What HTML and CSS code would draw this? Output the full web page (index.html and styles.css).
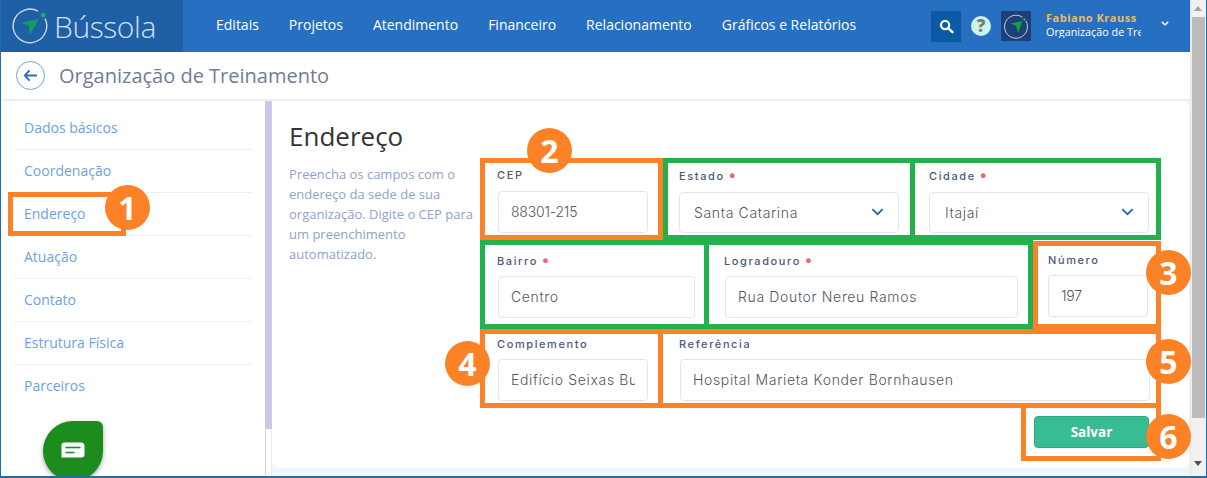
FILE: index.html
```html
<!DOCTYPE html>
<html lang="pt-BR">
<head>
<meta charset="utf-8">
<title>Bússola - Endereço</title>
<link rel="stylesheet" href="styles.css">
</head>
<body>
<div class="window">
  <div class="app">
    <header class="topbar">
      <div class="brand">
        <svg class="brand-icon" viewBox="0 0 36 36" aria-hidden="true">
          <path d="M26 3.2A16.8 16.8 0 1 0 33 10.5" fill="none" stroke="#c9dcea" stroke-width="1.4"/>
          <circle cx="31" cy="7" r="2.2" fill="#1eb36b"/>
          <path d="M9 15 L27 11 L18 27 L16.8 17.5 Z" fill="#149e5e"/>
        </svg>
        <span class="brand-name">Bússola</span>
      </div>
      <nav class="mainnav">
        <a>Editais</a><a>Projetos</a><a>Atendimento</a><a>Financeiro</a><a>Relacionamento</a><a>Gráficos e Relatórios</a>
      </nav>
      <div class="tools">
        <button class="search-btn" aria-label="Buscar">
          <svg viewBox="0 0 16 16" width="15" height="15"><circle cx="6.5" cy="6.5" r="4.4" fill="none" stroke="#fff" stroke-width="2.4"/><path d="M10 10l4.4 4" stroke="#fff" stroke-width="2.6" stroke-linecap="round"/></svg>
        </button>
        <span class="help">?</span>
        <span class="avatar">
          <svg viewBox="0 0 30 30" width="30" height="30">
            <path d="M21.5 6.2A11.5 11.5 0 1 0 25 10" fill="none" stroke="#d5dde8" stroke-width="0.9"/>
            <circle cx="23.5" cy="8.5" r="1.3" fill="#22b14c"/>
            <path d="M9.5 12.5 L21.5 10 L17 22 L15.2 15 Z" fill="#12a33c"/>
          </svg>
        </span>
        <div class="user">
          <div class="user-name">Fabiano Krauss</div>
          <div class="user-org">Organização de Treinamento</div>
        </div>
        <svg class="user-caret" viewBox="0 0 10 6" width="8" height="5"><path d="M1 1l4 3.6L9 1" fill="none" stroke="#fff" stroke-width="1.8"/></svg>
      </div>
    </header>

    <div class="subheader">
      <span class="back">
        <svg viewBox="0 0 16 14" width="15" height="13"><path d="M7 1.5L1.8 7 7 12.5M2.2 7H15" fill="none" stroke="#2f6fbb" stroke-width="2"/></svg>
      </span>
      <h1 class="page-title">Organização de Treinamento</h1>
    </div>

    <div class="content">
      <aside class="sidebar">
        <ul class="side-list">
          <li>Dados básicos</li>
          <li>Coordenação</li>
          <li class="is-marked">Endereço<span class="badge badge-1">1</span></li>
          <li>Atuação</li>
          <li>Contato</li>
          <li>Estrutura Física</li>
          <li>Parceiros</li>
        </ul>
        <div class="chat">
          <svg viewBox="0 0 24 18" width="24" height="18"><path d="M3.5 0.5H20a3.5 3.5 0 0 1 3.5 3.5v8.5a3 3 0 0 1-3 3H0.5V3.5a3 3 0 0 1 3-3z" fill="#fff"/><path d="M4.5 5.5H19.5" stroke="#1c8c1c" stroke-width="1.6"/><path d="M4.5 10.5H13.5" stroke="#1c8c1c" stroke-width="1.6"/></svg>
        </div>
      </aside>
      <div class="side-scroll"><span class="side-thumb"></span><span class="side-track"></span></div>

      <main class="main">
        <section class="card">
          <div class="intro">
            <h2 class="section-title">Endereço</h2>
            <p class="section-text">Preencha os campos com o endereço da sede de sua organização. Digite o CEP para um preenchimento automatizado.</p>
          </div>
          <form class="form">
            <div class="row row-1">
              <div class="field orange f-cep">
                <label>CEP</label>
                <div class="input num">88301-215</div>
                <span class="badge badge-2">2</span>
              </div>
              <div class="field green f-estado">
                <label>Estado <i>•</i></label>
                <div class="input select">Santa Catarina
                  <svg viewBox="0 0 14 9" width="13" height="8"><path d="M1.2 1.2L7 7l5.8-5.8" fill="none" stroke="#1a67ad" stroke-width="2"/></svg>
                </div>
              </div>
              <div class="field green f-cidade">
                <label>Cidade <i>•</i></label>
                <div class="input select">Itajaí
                  <svg viewBox="0 0 14 9" width="13" height="8"><path d="M1.2 1.2L7 7l5.8-5.8" fill="none" stroke="#1a67ad" stroke-width="2"/></svg>
                </div>
              </div>
            </div>
            <div class="row row-2">
              <div class="field green f-bairro">
                <label>Bairro <i>•</i></label>
                <div class="input">Centro</div>
              </div>
              <div class="field green f-logradouro">
                <label>Logradouro <i>•</i></label>
                <div class="input">Rua Doutor Nereu Ramos</div>
              </div>
              <div class="field orange f-numero">
                <label>Número</label>
                <div class="input num">197</div>
                <span class="badge badge-3">3</span>
              </div>
            </div>
            <div class="row row-3">
              <div class="field orange f-complemento">
                <label>Complemento</label>
                <div class="input"><span class="clip">Edifício Seixas Business</span></div>
                <span class="badge badge-4">4</span>
              </div>
              <div class="field orange f-referencia">
                <label>Referência</label>
                <div class="input">Hospital Marieta Konder Bornhausen</div>
                <span class="badge badge-5">5</span>
              </div>
            </div>
            <div class="row row-4">
              <div class="save-box">
                <button type="button" class="save">Salvar</button>
                <span class="badge badge-6">6</span>
              </div>
            </div>
          </form>
        </section>
      </main>
    </div>
  </div>

  <div class="scrollbar">
    <span class="sb-up"></span>
    <span class="sb-thumb"></span>
    <span class="sb-down"></span>
  </div>
</div>
</body>
</html>
```

FILE: styles.css
```css
*, *::before, *::after { box-sizing: border-box; }
html, body { margin: 0; padding: 0; height: 100%; overflow: hidden; }
body { font-family: "Open Sans", "Liberation Sans", sans-serif; background: #fff; }

.window {
  width: 1207px; height: 478px;
  display: flex;
  border-left: 1px solid #1f6fb5;
  border-right: 1px solid #1f6fb5;
  border-bottom: 2px solid #2a6a9f;
  overflow: hidden;
}
.app { width: 1189px; display: flex; flex-direction: column; }

/* top bar */
.topbar { height: 52px; background: #2770c1; display: flex; align-items: center; color: #fff; flex: none; }
.brand { width: 182px; height: 52px; background: #1f5fa5; display: flex; align-items: center; padding-left: 11px; flex: none; }
.brand-icon { width: 36px; height: 36px; flex: none; }
.brand-name { font-size: 30px; font-weight: 300; color: #cfe0ee; margin-left: 6px; letter-spacing: -0.4px; }
.mainnav { display: flex; gap: 30px; margin: 0 0 4px 33px; font-size: 14px; flex: none; }
.mainnav a { color: #fff; }
.tools { margin-left: auto; display: flex; align-items: center; height: 52px; padding-right: 21px; }
.search-btn { width: 30px; height: 31px; background: #0b5aa5; border: 0; padding: 0; display: flex; align-items: center; justify-content: center; }
.help { width: 20px; height: 20px; border-radius: 50%; background: #c9f5ec; color: #7c7c7c; font-weight: 800; font-size: 17px; line-height: 20px; text-align: center; margin-left: 10px; }
.avatar { width: 30px; height: 30px; background: #1f3f7a; margin-left: 10px; display: block; }
.user { width: 95px; margin: -3px 0 0 15px; overflow: hidden; white-space: nowrap; font-size: 11px; line-height: 13px; }
.user-name { color: #e8bd5a; font-weight: 700; letter-spacing: 0.5px; margin-bottom: 1px; }
.user-org { color: #fff; font-weight: 500; font-size: 10.8px; }
.user-caret { margin: -6px 0 0 20px; }

/* sub header */
.subheader { height: 49px; flex: none; display: flex; align-items: center; padding-left: 15px; background: #fff; border-bottom: 2px solid #e4f0f6; }
.back { width: 29px; height: 29px; border: 1px solid #6da4dc; border-radius: 50%; display: flex; align-items: center; justify-content: center; }
.page-title { margin: 0 0 0 14px; font-size: 20px; font-weight: 400; color: #6f7d93; }

/* body */
.content { flex: 1; display: flex; min-height: 0; }
.sidebar { width: 264px; flex: none; position: relative; background: #fff; padding: 6px 13px 0; }
.side-list { list-style: none; margin: 0; padding: 0; }
.side-list li { height: 43px; line-height: 41px; padding-left: 10px; font-size: 14px; color: #6ea2dc; border-bottom: 1px solid #eceff1; position: relative; }
.side-list li:last-child { border-bottom: 0; }
.is-marked::before { content: ""; position: absolute; left: -6px; top: -1px; width: 118px; height: 44px; border: 5px solid #fb8227; }

.side-scroll { width: 7px; flex: none; display: flex; flex-direction: column; }
.side-thumb { height: 328px; background: #cfc6e8; flex: none; }
.side-track { flex: 1; border-left: 1px solid #d8d8d8; border-right: 1px solid #eee; background: #fff; }

.chat {
  position: absolute; left: 42px; top: 320px; width: 60px; height: 60px;
  background: #1c8c1c;
  border-radius: 50% 6px 50% 50%;
  box-shadow: 0 2px 5px rgba(0,0,0,.35);
  display: flex; align-items: center; justify-content: center;
}

.main { flex: 1; background: #f2f6fa; padding: 0 1px 8px 0; min-width: 0; }
.card { height: 100%; background: #fff; border-radius: 0 8px 8px 8px; display: flex; padding-left: 17px; }
.intro { width: 191px; flex: none; padding-top: 18px; }
.section-title { margin: 0; font-size: 26px; font-weight: 400; color: #333; line-height: 34px; }
.section-text { margin: 11px 0 0; font-size: 13px; line-height: 20px; color: #8fa3c8; width: 190px; }

/* form */
.form { width: 681px; padding-top: 57px; font-family: Inter, "Open Sans", sans-serif; }
.row { display: flex; }
.row-1 { height: 82px; }
.row-2 { height: 89px; }
.row-3 { height: 79px; }
.row-4 { height: 53px; justify-content: flex-end; }

.field { position: relative; border: 5px solid; height: 100%; background: #fff; flex: none; }
.orange { border-color: #fb8227; }
.green { border-color: #22b14c; }
.field label { display: block; font-size: 11px; letter-spacing: 1.6px; color: #4a5a78; font-weight: 500; line-height: 14px; white-space: nowrap; }
.field label i { color: #e86a72; font-style: normal; font-size: 15px; line-height: 14px; letter-spacing: 0; margin-left: -1px; }
.input {
  height: 42px; border: 1px solid #dfe7f0; border-radius: 4px; background: #fff;
  display: flex; align-items: center; justify-content: space-between;
  padding: 0 12px 2px; font-size: 14px; font-weight: 300; color: #555560; white-space: nowrap;
  letter-spacing: 0.65px;
}
.input.num { letter-spacing: -0.2px; }
.clip { overflow: hidden; display: block; width: 100%; }
.select { height: 41px; }
.select svg { flex: none; }

.row-1 .field { padding-top: 5px; }
.row-1 .input { margin-top: 9px; }
.row-2 .field { padding-top: 8px; }
.row-2 .input { margin-top: 8px; }
.row-3 .field { padding-top: 3px; }
.row-3 .input { margin-top: 8px; }

.f-cep { width: 183px; padding-left: 13px; }
.f-cep label, .f-bairro label, .f-complemento label, .f-logradouro label, .f-referencia label { margin-left: -1px; }
.f-cep .input { width: 150px; }
.f-estado { width: 252px; padding-left: 11px; }
.f-estado .input { width: 220px; padding: 0 14px 1px; }
.f-cidade { width: 246px; padding-left: 14px; border-left: 0; }
.f-cidade .input { width: 220px; padding: 0 14px 1px 15px; }

.f-bairro { width: 229px; padding-left: 13px; }
.f-bairro .input { width: 197px; }
.f-logradouro { width: 324px; padding-left: 16px; border-left: 0; }
.f-logradouro .input { width: 293px; }
.row-2 .f-numero { width: 128px; height: 88px; margin-top: 1px; padding: 7px 0 0 10px; }
.f-numero .input { width: 100px; }

.f-complemento { width: 183px; padding-left: 13px; }
.f-complemento .input { width: 150px; }
.f-referencia { width: 498px; padding-left: 17px; border-left: 0; }
.f-referencia .input { width: 470px; }

.save-box { position: relative; width: 140px; height: 53px; border: 5px solid #fb8227; border-top: 0; padding: 8px 0 0 8px; background: #fff; }
.save { width: 115px; height: 32px; background: #38bc94; border: 1px solid #2ea784; border-radius: 4px; color: #fff; font: 700 13.5px "Open Sans", sans-serif; padding: 0; display: block; }

/* numbered annotation circles */
.badge {
  position: absolute; width: 45px; height: 45px; border-radius: 50%;
  background: #fb8227; color: #fff; font: 700 32px/45px "Open Sans", sans-serif;
  text-align: center; z-index: 2; letter-spacing: 0;
}
.badge-1 { left: 91px; top: -8px; }
.badge-2 { left: 42px; top: -35px; }
.badge-3 { right: -35px; top: 4px; }
.badge-4 { left: -40px; top: 7px; }
.badge-5 { right: -35px; top: 5px; }
.badge-6 { right: -35px; top: 6px; }

/* window scrollbar */
.scrollbar { width: 16px; flex: none; background: #f1f1f1; position: relative; display: flex; flex-direction: column; border-left: 1px solid #e6e6e6; }
.sb-up { height: 17px; flex: none; position: relative; }
.sb-up::after { content: ""; position: absolute; left: 3px; top: 6px; width: 8px; height: 5px; border: 4px solid transparent; border-top: 0; border-bottom: 5px solid #a3a3a3; }
.sb-thumb { height: 401px; margin: 0 1px 0 1px; background: #bcbcbc; flex: none; }
.sb-down { flex: 1; position: relative; }
.sb-down::after { content: ""; position: absolute; left: 3px; bottom: 10px; width: 8px; height: 5px; border: 4px solid transparent; border-bottom: 0; border-top: 5px solid #505050; }
```
